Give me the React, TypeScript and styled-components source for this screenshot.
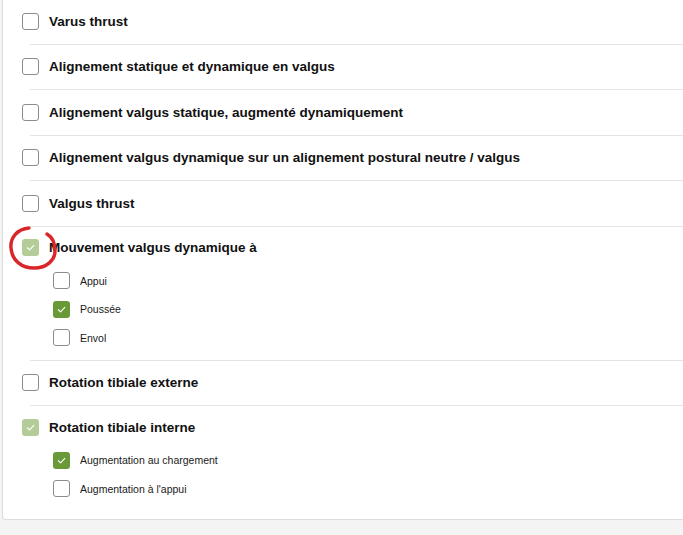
import React from "react";
import styled, { createGlobalStyle } from "styled-components";

const Global = createGlobalStyle`
  html, body { margin: 0; padding: 0; background: #f4f4f4; overflow: hidden; }
  body { font-family: "Liberation Sans", Arial, sans-serif; }
`;

const Page = styled.div`
  padding-left: 2px;
  width: 700px;
`;

const Card = styled.div`
  position: relative;
  background: #fff;
  border: 1px solid #dcdcdc;
  border-top: none;
  border-right: none;
  border-bottom-left-radius: 4px;
  padding-bottom: 8.5px;
  margin-top: -1px;
`;

const Item = styled.div`
  display: flex;
  flex-direction: column;
  & + & {
    border-top: 1px solid #e4e4e4;
    margin-left: 27px;
  }
  & + & > * {
    margin-left: -27px;
  }
`;

const Header = styled.label<{ $compact?: boolean }>`
  display: flex;
  align-items: center;
  gap: 10px;
  height: ${(p) => (p.$compact ? "42px" : "44.5px")};
  padding-left: 19px;
  font-size: 13.5px;
  font-weight: bold;
  color: #111;
`;

const SubList = styled.div`
  display: flex;
  flex-direction: column;
  margin-top: -2px;
  padding-left: 50px;
  padding-bottom: 7.5px;
`;

const SubRow = styled.label`
  display: flex;
  align-items: center;
  gap: 10px;
  height: 28.5px;
  font-size: 10.5px;
  color: #1a1a1a;
`;

const Box = styled.span<{ $state: "off" | "light" | "on" }>`
  box-sizing: border-box;
  width: 17px;
  height: 17px;
  flex: none;
  border-radius: 3px;
  display: flex;
  align-items: center;
  justify-content: center;
  border: ${(p) => (p.$state === "off" ? "1px solid #8c8c8c" : "none")};
  background: ${(p) =>
    p.$state === "off" ? "#fff" : p.$state === "light" ? "#b4cd98" : "#6a9a37"};
`;

const Annotation = styled.svg`
  position: absolute;
  left: 3px;
  top: 225px;
  pointer-events: none;
`;

type Sub = { label: string; checked: boolean };
type Entry = { label: string; state: "off" | "light"; subs?: Sub[] };

const entries: Entry[] = [
  { label: "Varus thrust", state: "off" },
  { label: "Alignement statique et dynamique en valgus", state: "off" },
  { label: "Alignement valgus statique, augmenté dynamiquement", state: "off" },
  { label: "Alignement valgus dynamique sur un alignement postural neutre / valgus", state: "off" },
  { label: "Valgus thrust", state: "off" },
  {
    label: "Mouvement valgus dynamique à",
    state: "light",
    subs: [
      { label: "Appui", checked: false },
      { label: "Poussée", checked: true },
      { label: "Envol", checked: false },
    ],
  },
  { label: "Rotation tibiale externe", state: "off" },
  {
    label: "Rotation tibiale interne",
    state: "light",
    subs: [
      { label: "Augmentation au chargement", checked: true },
      { label: "Augmentation à l'appui", checked: false },
    ],
  },
];

function Check({ state }: { state: "off" | "light" | "on" }) {
  return (
    <Box $state={state}>
      {state !== "off" && (
        <svg width="11" height="11" viewBox="0 0 12 12" fill="none">
          <path d="M2.5 6.3 L5 8.6 L9.6 3.6" stroke="#fff" strokeWidth="1.2" strokeLinecap="round" strokeLinejoin="round" />
        </svg>
      )}
    </Box>
  );
}

export default function App() {
  return (
    <>
      <Global />
      <Page>
        <Card>
          {entries.map((e) => (
            <Item key={e.label}>
              <Header $compact={!!e.subs}>
                <Check state={e.state} />
                {e.label}
              </Header>
              {e.subs && (
                <SubList>
                  {e.subs.map((s) => (
                    <SubRow key={s.label}>
                      <Check state={s.checked ? "on" : "off"} />
                      {s.label}
                    </SubRow>
                  ))}
                </SubList>
              )}
            </Item>
          ))}
          <Annotation width="54" height="50" viewBox="0 0 54 50">
            <path
              d="M23 4 C11 5 4 14 5 24 C6 37 16 44 28 44 C41 44 49 36 49 27 C49 19 46 13 41 10"
              stroke="#d9262a"
              strokeWidth="3.4"
              fill="none"
              strokeLinecap="round"
            />
          </Annotation>
        </Card>
      </Page>
    </>
  );
}
